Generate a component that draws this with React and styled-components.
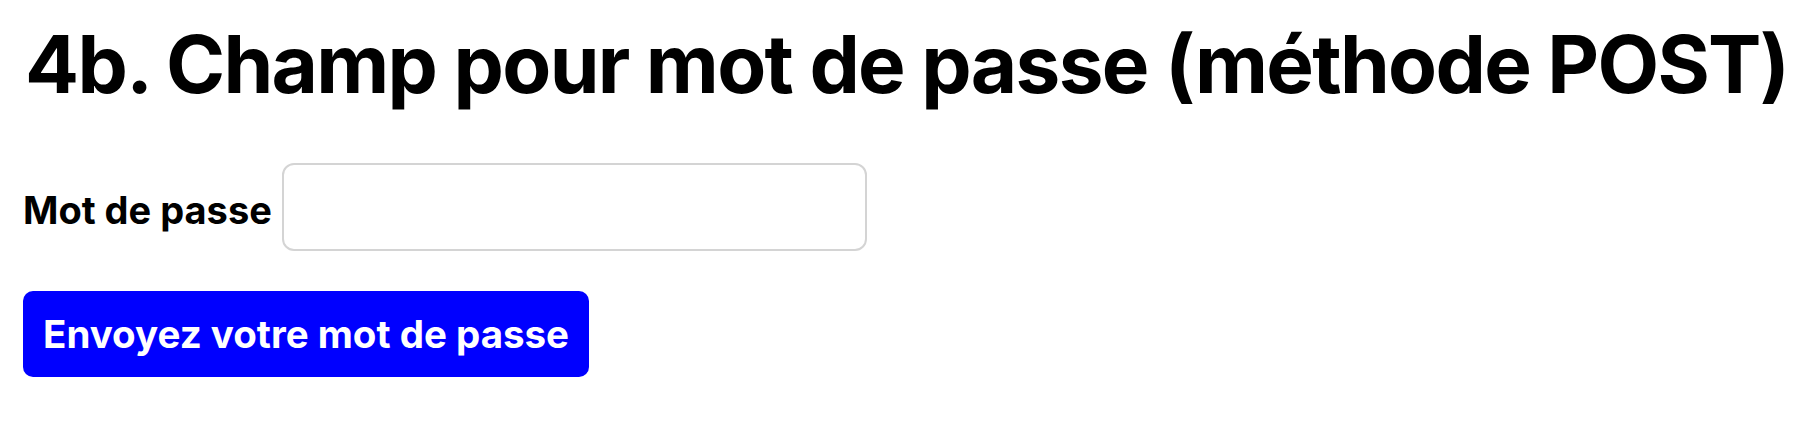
import React from 'react';
import styled, { createGlobalStyle } from 'styled-components';

const GlobalStyle = createGlobalStyle`
  body {
    margin: 0;
    background: #fff;
    font-family: Inter, "Noto Sans", sans-serif;
    color: #000;
  }
`;

export const Page = styled.div`
  padding: 20px 23px;
`;

export const Title = styled.h1`
  margin: 0 0 55px 2px;
  font-size: 80px;
  line-height: 88px;
  font-weight: 700;
  letter-spacing: -1.7px;
  white-space: nowrap;
`;

export const Form = styled.form`
  display: flex;
  flex-direction: column;
  align-items: flex-start;
  gap: 40px;
`;

export const Field = styled.div`
  display: flex;
  align-items: center;
  gap: 10px;
`;

export const Label = styled.label`
  font-size: 38px;
  font-weight: 700;
  padding-top: 6px;
`;

export const Input = styled.input`
  width: 585px;
  height: 88px;
  box-sizing: border-box;
  border: 2px solid #d4d4d4;
  border-radius: 12px;
  background: #fff;
  font-size: 36px;
  padding: 0 16px;
  outline: none;
`;

export const Button = styled.button`
  height: 86px;
  box-sizing: border-box;
  padding: 0 20px;
  border: none;
  border-radius: 10px;
  background: #0000ff;
  color: #fff;
  font-family: Inter, "Noto Sans", sans-serif;
  font-size: 38.5px;
  font-weight: 700;
  cursor: pointer;
`;

class App extends React.PureComponent {
  render() {
    return (
      <Page>
        <GlobalStyle />
        <Title>4b. Champ pour mot de passe (méthode POST)</Title>
        <Form method="post" onSubmit={(e) => e.preventDefault()}>
          <Field>
            <Label htmlFor="pwd">Mot de passe</Label>
            <Input id="pwd" type="password" name="password" />
          </Field>
          <Button type="submit">Envoyez votre mot de passe</Button>
        </Form>
      </Page>
    );
  }
}

export default App;
